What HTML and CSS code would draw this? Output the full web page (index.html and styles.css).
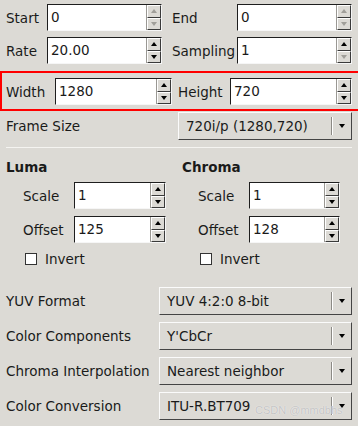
FILE: index.html
```html
<!DOCTYPE html>
<html lang="en">
  <head>
    <meta charset="UTF-8" />
    <title>YUV Settings</title>
    <link rel="stylesheet" href="styles.css">
  </head>
  <body>
    <div class="panel">
      <div class="range">
        <span class="lbl">Start</span>
        <div class="spin"><span class="val">0</span><span class="btns"><span class="up off"></span><span class="down off"></span></span></div>
        <span class="lbl">End</span>
        <div class="spin"><span class="val">0</span><span class="btns"><span class="up off"></span><span class="down off"></span></span></div>
        <span class="lbl">Rate</span>
        <div class="spin"><span class="val">20.00</span><span class="btns"><span class="up"></span><span class="down"></span></span></div>
        <span class="lbl">Sampling</span>
        <div class="spin"><span class="val">1</span><span class="btns"><span class="up"></span><span class="down off"></span></span></div>
      </div>

      <div class="size-box">
        <span class="lbl w-lbl">Width</span>
        <div class="spin w-spin"><span class="val">1280</span><span class="btns"><span class="up"></span><span class="down"></span></span></div>
        <span class="lbl h-lbl">Height</span>
        <div class="spin h-spin"><span class="val">720</span><span class="btns"><span class="up"></span><span class="down"></span></span></div>
      </div>

      <div class="frame-row">
        <span class="lbl">Frame Size</span>
        <div class="combo frame-combo"><span class="txt">720i/p (1280,720)</span><span class="arr"></span></div>
      </div>

      <div class="sep"></div>

      <div class="planes">
        <div class="plane">
          <h3>Luma</h3>
          <div class="prow"><span class="lbl">Scale</span><div class="spin"><span class="val">1</span><span class="btns"><span class="up"></span><span class="down"></span></span></div></div>
          <div class="prow"><span class="lbl">Offset</span><div class="spin"><span class="val">125</span><span class="btns"><span class="up"></span><span class="down"></span></span></div></div>
          <div class="check"><span class="box"></span>Invert</div>
        </div>
        <div class="plane chroma">
          <h3>Chroma</h3>
          <div class="prow"><span class="lbl">Scale</span><div class="spin"><span class="val">1</span><span class="btns"><span class="up"></span><span class="down"></span></span></div></div>
          <div class="prow"><span class="lbl">Offset</span><div class="spin"><span class="val">128</span><span class="btns"><span class="up"></span><span class="down"></span></span></div></div>
          <div class="check"><span class="box"></span>Invert</div>
        </div>
      </div>

      <div class="opts">
        <div class="crow"><span class="lbl">YUV Format</span><div class="combo"><span class="txt">YUV 4:2:0 8-bit</span><span class="arr"></span></div></div>
        <div class="crow"><span class="lbl">Color Components</span><div class="combo"><span class="txt">Y'CbCr</span><span class="arr"></span></div></div>
        <div class="crow"><span class="lbl">Chroma Interpolation</span><div class="combo"><span class="txt">Nearest neighbor</span><span class="arr"></span></div></div>
        <div class="crow"><span class="lbl">Color Conversion</span><div class="combo"><span class="txt">ITU-R.BT709</span><span class="arr"></span></div></div>
      </div>

      <span class="mark">CSDN @mmdbhs</span>
    </div>
  </body>
</html>
```

FILE: styles.css
```css
body {
  margin: 0;
  background-color: #dcdad5;
  font-family: "DejaVu Sans", sans-serif;
  font-size: 13.5px;
  color: #1a1a1a;
}

.panel {
  position: relative;
  padding-top: 4px;
  height: 422px;
}

.lbl {
  white-space: nowrap;
}

/* spin boxes */
.spin {
  display: flex;
  box-sizing: border-box;
  height: 27px;
  border: 1px solid;
  border-color: #1e1e1e #f6f6f6 #f6f6f6 #1e1e1e;
  background-color: #fff;
}

.val {
  flex: 1;
  padding-left: 3px;
  line-height: 25px;
}

.btns {
  display: flex;
  flex-direction: column;
  width: 14px;
  border-left: 1px solid #9a9893;
  background-color: #dcdad5;
}

.btns span {
  flex: 1;
  display: flex;
  align-items: center;
  justify-content: center;
  border: 1px solid;
  border-color: #fff #3a3a3a #3a3a3a #fff;
}

.btns .up::after,
.btns .down::after {
  content: "";
  border-left: 3px solid transparent;
  border-right: 3px solid transparent;
}

.btns .up::after {
  border-bottom: 4px solid #000;
}

.btns .down::after {
  border-top: 4px solid #000;
}

.btns .up.off::after {
  border-bottom-color: #a09e99;
}

.btns .down.off::after {
  border-top-color: #a09e99;
}

/* top range grid */
.range {
  display: grid;
  grid-template-columns: 41px 115px 75px 115px;
  row-gap: 6px;
  align-items: center;
  padding-left: 6px;
}

.range .lbl:nth-child(3),
.range .lbl:nth-child(7) {
  padding-left: 10px;
}

/* width / height box */
.size-box {
  display: flex;
  align-items: center;
  margin-top: 7px;
  padding: 5px 0 4px 4px;
  border: 2px solid #f00;
  border-right: 0;
}

.w-lbl {
  width: 49px;
}

.w-spin {
  width: 117px;
}

.h-lbl {
  width: 52px;
  padding-left: 6px;
}

.h-spin {
  width: 122px;
}

/* combos */
.combo {
  display: flex;
  align-items: center;
  box-sizing: border-box;
  height: 28px;
  padding-left: 7px;
  border: 1px solid;
  border-color: #fbfbfb #444 #444 #fbfbfb;
  background-color: #dcdad5;
}

.combo .txt {
  flex: 1;
  white-space: nowrap;
}

.combo .arr {
  display: flex;
  align-items: center;
  justify-content: center;
  width: 19px;
  height: 18px;
  border-left: 1px solid #8c8a85;
  box-shadow: inset 1px 0 0 #fff;
}

.combo .arr::after {
  content: "";
  border-left: 3.5px solid transparent;
  border-right: 3.5px solid transparent;
  border-top: 4px solid #000;
}

.frame-row {
  display: flex;
  align-items: center;
  justify-content: space-between;
  padding: 1px 6px 0 6px;
}

.frame-combo {
  width: 174px;
}

.sep {
  margin: 7px 6px 0 6px;
  border-top: 1px solid #f5f4f1;
}

/* luma / chroma */
.planes {
  display: flex;
  padding-left: 6px;
}

.plane {
  width: 177px;
}

.plane h3 {
  margin: 11px 0 7px 0;
  font-size: 13.5px;
  font-weight: bold;
}

.prow {
  display: flex;
  align-items: center;
  margin-bottom: 7px;
  padding-left: 17px;
}

.prow .lbl {
  width: 51px;
}

.prow .spin {
  width: 92px;
}

.chroma .prow {
  padding-left: 16px;
}

.chroma .prow .spin {
  width: 91px;
}

.check {
  display: flex;
  align-items: center;
  gap: 8px;
  margin-top: 8px;
  padding-left: 19px;
}

.chroma .check {
  padding-left: 18px;
}

.box {
  box-sizing: border-box;
  width: 12px;
  height: 12px;
  border: 1px solid #333;
  background-color: #fff;
}

/* bottom options */
.opts {
  display: flex;
  flex-direction: column;
  gap: 7px;
  margin-top: 20px;
  padding: 0 6px;
}

.crow {
  display: flex;
  align-items: center;
}

.crow .lbl {
  width: 153px;
}

.crow .combo {
  width: 193px;
}

.mark {
  position: absolute;
  left: 255px;
  top: 404px;
  white-space: nowrap;
  font-family: "Liberation Sans", sans-serif;
  font-size: 11px;
  color: #c4c4c4;
  text-shadow: 0 0 1px #fff;
}
```
